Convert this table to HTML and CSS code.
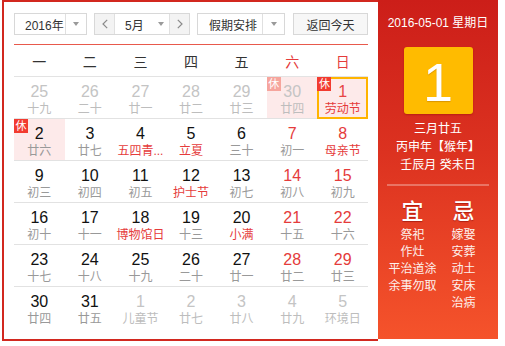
FILE: index.html
```html
<!DOCTYPE html>
<html lang="zh-CN">
<head>
<meta charset="utf-8">
<title>万年历</title>
<link rel="stylesheet" href="styles.css">
</head>
<body>
<div class="cal">
  <div class="main">
    <div class="toolbar">
      <div class="sel year">
        <span class="sel-txt">2016年</span>
        <span class="sel-arr"><i class="tri"></i></span>
      </div>
      <div class="month">
        <span class="mbtn"><svg width="6" height="10" viewBox="0 0 6 10"><path d="M5.2 0.8L1 5l4.2 4.2" fill="none" stroke="#8a8a8a" stroke-width="1.2"/></svg></span>
        <span class="mval"><span class="mtxt">5月</span><i class="tri"></i></span>
        <span class="mbtn"><svg width="6" height="10" viewBox="0 0 6 10"><path d="M0.8 0.8L5 5 0.8 9.2" fill="none" stroke="#8a8a8a" stroke-width="1.2"/></svg></span>
      </div>
      <div class="sel holsel">
        <span class="sel-txt">假期安排</span>
        <span class="sel-arr"><i class="tri"></i></span>
      </div>
      <button class="today">返回今天</button>
    </div>

    <div class="weekdays">
      <span>一</span><span>二</span><span>三</span><span>四</span><span>五</span><span class="red">六</span><span class="red">日</span>
    </div>

    <div class="weeks">
      <div class="week">
        <div class="day other"><span class="num">25</span><span class="lunar">十九</span></div>
        <div class="day other"><span class="num">26</span><span class="lunar">二十</span></div>
        <div class="day other"><span class="num">27</span><span class="lunar">廿一</span></div>
        <div class="day other"><span class="num">28</span><span class="lunar">廿二</span></div>
        <div class="day other"><span class="num">29</span><span class="lunar">廿三</span></div>
        <div class="day other hol"><span class="badge faded">休</span><span class="num">30</span><span class="lunar">廿四</span></div>
        <div class="day hol cur wk"><span class="badge">休</span><span class="num">1</span><span class="lunar fest">劳动节</span></div>
      </div>
      <div class="week">
        <div class="day hol"><span class="badge">休</span><span class="num">2</span><span class="lunar">廿六</span></div>
        <div class="day"><span class="num">3</span><span class="lunar">廿七</span></div>
        <div class="day"><span class="num">4</span><span class="lunar fest">五四青...</span></div>
        <div class="day"><span class="num">5</span><span class="lunar fest">立夏</span></div>
        <div class="day"><span class="num">6</span><span class="lunar">三十</span></div>
        <div class="day wk"><span class="num">7</span><span class="lunar">初一</span></div>
        <div class="day wk"><span class="num">8</span><span class="lunar fest">母亲节</span></div>
      </div>
      <div class="week">
        <div class="day"><span class="num">9</span><span class="lunar">初三</span></div>
        <div class="day"><span class="num">10</span><span class="lunar">初四</span></div>
        <div class="day"><span class="num">11</span><span class="lunar">初五</span></div>
        <div class="day"><span class="num">12</span><span class="lunar fest">护士节</span></div>
        <div class="day"><span class="num">13</span><span class="lunar">初七</span></div>
        <div class="day wk"><span class="num">14</span><span class="lunar">初八</span></div>
        <div class="day wk"><span class="num">15</span><span class="lunar">初九</span></div>
      </div>
      <div class="week">
        <div class="day"><span class="num">16</span><span class="lunar">初十</span></div>
        <div class="day"><span class="num">17</span><span class="lunar">十一</span></div>
        <div class="day"><span class="num">18</span><span class="lunar fest">博物馆日</span></div>
        <div class="day"><span class="num">19</span><span class="lunar">十三</span></div>
        <div class="day"><span class="num">20</span><span class="lunar fest">小满</span></div>
        <div class="day wk"><span class="num">21</span><span class="lunar">十五</span></div>
        <div class="day wk"><span class="num">22</span><span class="lunar">十六</span></div>
      </div>
      <div class="week">
        <div class="day"><span class="num">23</span><span class="lunar">十七</span></div>
        <div class="day"><span class="num">24</span><span class="lunar">十八</span></div>
        <div class="day"><span class="num">25</span><span class="lunar">十九</span></div>
        <div class="day"><span class="num">26</span><span class="lunar">二十</span></div>
        <div class="day"><span class="num">27</span><span class="lunar">廿一</span></div>
        <div class="day wk"><span class="num">28</span><span class="lunar">廿二</span></div>
        <div class="day wk"><span class="num">29</span><span class="lunar">廿三</span></div>
      </div>
      <div class="week last">
        <div class="day"><span class="num">30</span><span class="lunar">廿四</span></div>
        <div class="day"><span class="num">31</span><span class="lunar">廿五</span></div>
        <div class="day other"><span class="num">1</span><span class="lunar">儿童节</span></div>
        <div class="day other"><span class="num">2</span><span class="lunar">廿七</span></div>
        <div class="day other"><span class="num">3</span><span class="lunar">廿八</span></div>
        <div class="day other"><span class="num">4</span><span class="lunar">廿九</span></div>
        <div class="day other"><span class="num">5</span><span class="lunar">环境日</span></div>
      </div>
    </div>
  </div>

  <aside class="panel">
    <div class="pdate">2016-05-01 星期日</div>
    <div class="bigday">1</div>
    <div class="plunar">
      <div>三月廿五</div>
      <div>丙申年【猴年】</div>
      <div>壬辰月 癸未日</div>
    </div>
    <div class="psep"></div>
    <div class="yiji">
      <div class="col">
        <div class="yj-title">宜</div>
        <div>祭祀</div>
        <div>作灶</div>
        <div>平治道涂</div>
        <div>余事勿取</div>
      </div>
      <div class="col">
        <div class="yj-title">忌</div>
        <div>嫁娶</div>
        <div>安葬</div>
        <div>动土</div>
        <div>安床</div>
        <div>治病</div>
      </div>
    </div>
  </aside>
</div>
</body>
</html>
```

FILE: styles.css
```css
* { box-sizing: border-box; }

html, body {
  margin: 0;
  padding: 0;
  background: #fff;
}

body {
  font-family: "Liberation Sans", "Noto Sans CJK SC", sans-serif;
  color: #333;
}

.cal {
  display: flex;
  align-items: flex-start;
  margin-left: 2px;
  width: 496px;
}

.main {
  width: 376px;
  height: 341px;
  border: 2px solid #d2281f;
  border-right: none;
  padding: 11px 10px 10px 10px;
}

/* toolbar */
.toolbar {
  display: flex;
  align-items: stretch;
  height: 22px;
  font-size: 12px;
  color: #333;
}

.sel {
  display: flex;
  border: 1px solid #d8d8d8;
  background: #fff;
}
.sel-txt {
  display: flex;
  align-items: center;
  padding-left: 10px;
}
.sel-arr {
  display: flex;
  align-items: center;
  justify-content: center;
  border-left: 1px solid #e0e0e0;
}
.year { width: 73px; }
.year .sel-txt { width: 51px; }
.year .sel-arr { width: 21px; }

.holsel { width: 88px; margin-left: 7px; }
.holsel .sel-txt { width: 65px; padding-left: 11px; }
.holsel .sel-arr { width: 22px; }

.tri {
  display: inline-block;
  width: 0;
  height: 0;
  border-left: 3.5px solid transparent;
  border-right: 3.5px solid transparent;
  border-top: 4px solid #9a9a9a;
}

.month {
  display: flex;
  width: 96px;
  margin-left: 7px;
  border: 1px solid #d8d8d8;
}
.mbtn {
  width: 20px;
  display: flex;
  align-items: center;
  justify-content: center;
  background: #f3f3f3;
}
.mbtn:first-child { border-right: 1px solid #e0e0e0; }
.mbtn:last-child { border-left: 1px solid #e0e0e0; }
.mval {
  flex: 1;
  display: flex;
  align-items: center;
  padding-left: 10px;
  background: #fff;
}
.mtxt { width: 33px; }

.today {
  margin-left: 8px;
  width: 75px;
  height: 22px;
  padding: 0;
  border: 1px solid #d8d8d8;
  background: #f7f7f7;
  font-family: inherit;
  font-size: 12px;
  color: #333;
}

/* weekday header */
.weekdays {
  margin-top: 9px;
  border-top: 1px solid #e8594c;
  border-bottom: 1px solid #e3e3e3;
  height: 33px;
  padding-top: 7px;
  display: grid;
  grid-template-columns: repeat(7, 1fr);
  font-size: 14px;
  line-height: 20px;
  text-align: center;
  color: #333;
}
.weekdays .red { color: #e53b3b; }

/* days */
.week {
  display: grid;
  grid-template-columns: repeat(7, 1fr);
  height: 42px;
  border-bottom: 1px solid #e2e2e2;
}
.week.last { border-bottom-color: transparent; }

.day {
  position: relative;
  display: flex;
  flex-direction: column;
  align-items: center;
  padding-top: 6px;
  height: 41px;
}
.num {
  font-size: 16px;
  line-height: 18px;
  color: #111;
}
.lunar {
  font-size: 12px;
  line-height: 16px;
  color: #999;
  white-space: nowrap;
}
.wk .num { color: #e53b3b; }
.fest { color: #e53b3b; }
.other .num { color: #c4c4c4; }
.other .lunar { color: #bdbdbd; }

.hol { background: #fdeaea; }
.cur {
  box-shadow: inset 0 0 0 2px #ffb400;
  height: 42px;
}
.cur .num { color: #e74444; }

.badge {
  position: absolute;
  top: 0;
  left: 0;
  width: 14px;
  height: 14px;
  background: #f23b30;
  color: #fff;
  font-size: 11px;
  line-height: 14px;
  text-align: center;
}
.badge.faded { background: #f6a59d; }

/* right panel */
.panel {
  width: 120px;
  height: 339px;
  background: linear-gradient(180deg, #cc1e19 0%, #dc3220 45%, #f5532b 100%);
  color: #fff;
  text-align: center;
  padding-top: 15px;
  display: flex;
  flex-direction: column;
  align-items: center;
}
.pdate {
  font-size: 12px;
  line-height: 16px;
}
.bigday {
  margin-top: 16px;
  width: 69px;
  height: 67px;
  background: #ffbb00;
  border-radius: 3px;
  box-shadow: 0 1px 2px rgba(120, 0, 0, 0.35);
  font-size: 54px;
  line-height: 70px;
  color: #fff;
  text-shadow: 0 1px 1px rgba(150, 80, 0, 0.35);
}
.plunar {
  margin-top: 6px;
  font-size: 12px;
  line-height: 18px;
}
.psep {
  margin-top: 10px;
  width: 102px;
  height: 2px;
  background: rgba(255, 255, 255, 0.3);
}
.yiji {
  margin-top: 13px;
  display: flex;
  justify-content: center;
  font-size: 12px;
  line-height: 17px;
  color: #fdf0ec;
}
.yiji .col {
  width: 51px;
  display: flex;
  flex-direction: column;
  align-items: center;
  white-space: nowrap;
}
.yj-title {
  font-size: 22px;
  line-height: 26px;
  font-weight: 500;
  color: #fff;
  text-shadow: 0 1px 1px rgba(120, 0, 0, 0.5);
  margin-bottom: 2px;
}
```
